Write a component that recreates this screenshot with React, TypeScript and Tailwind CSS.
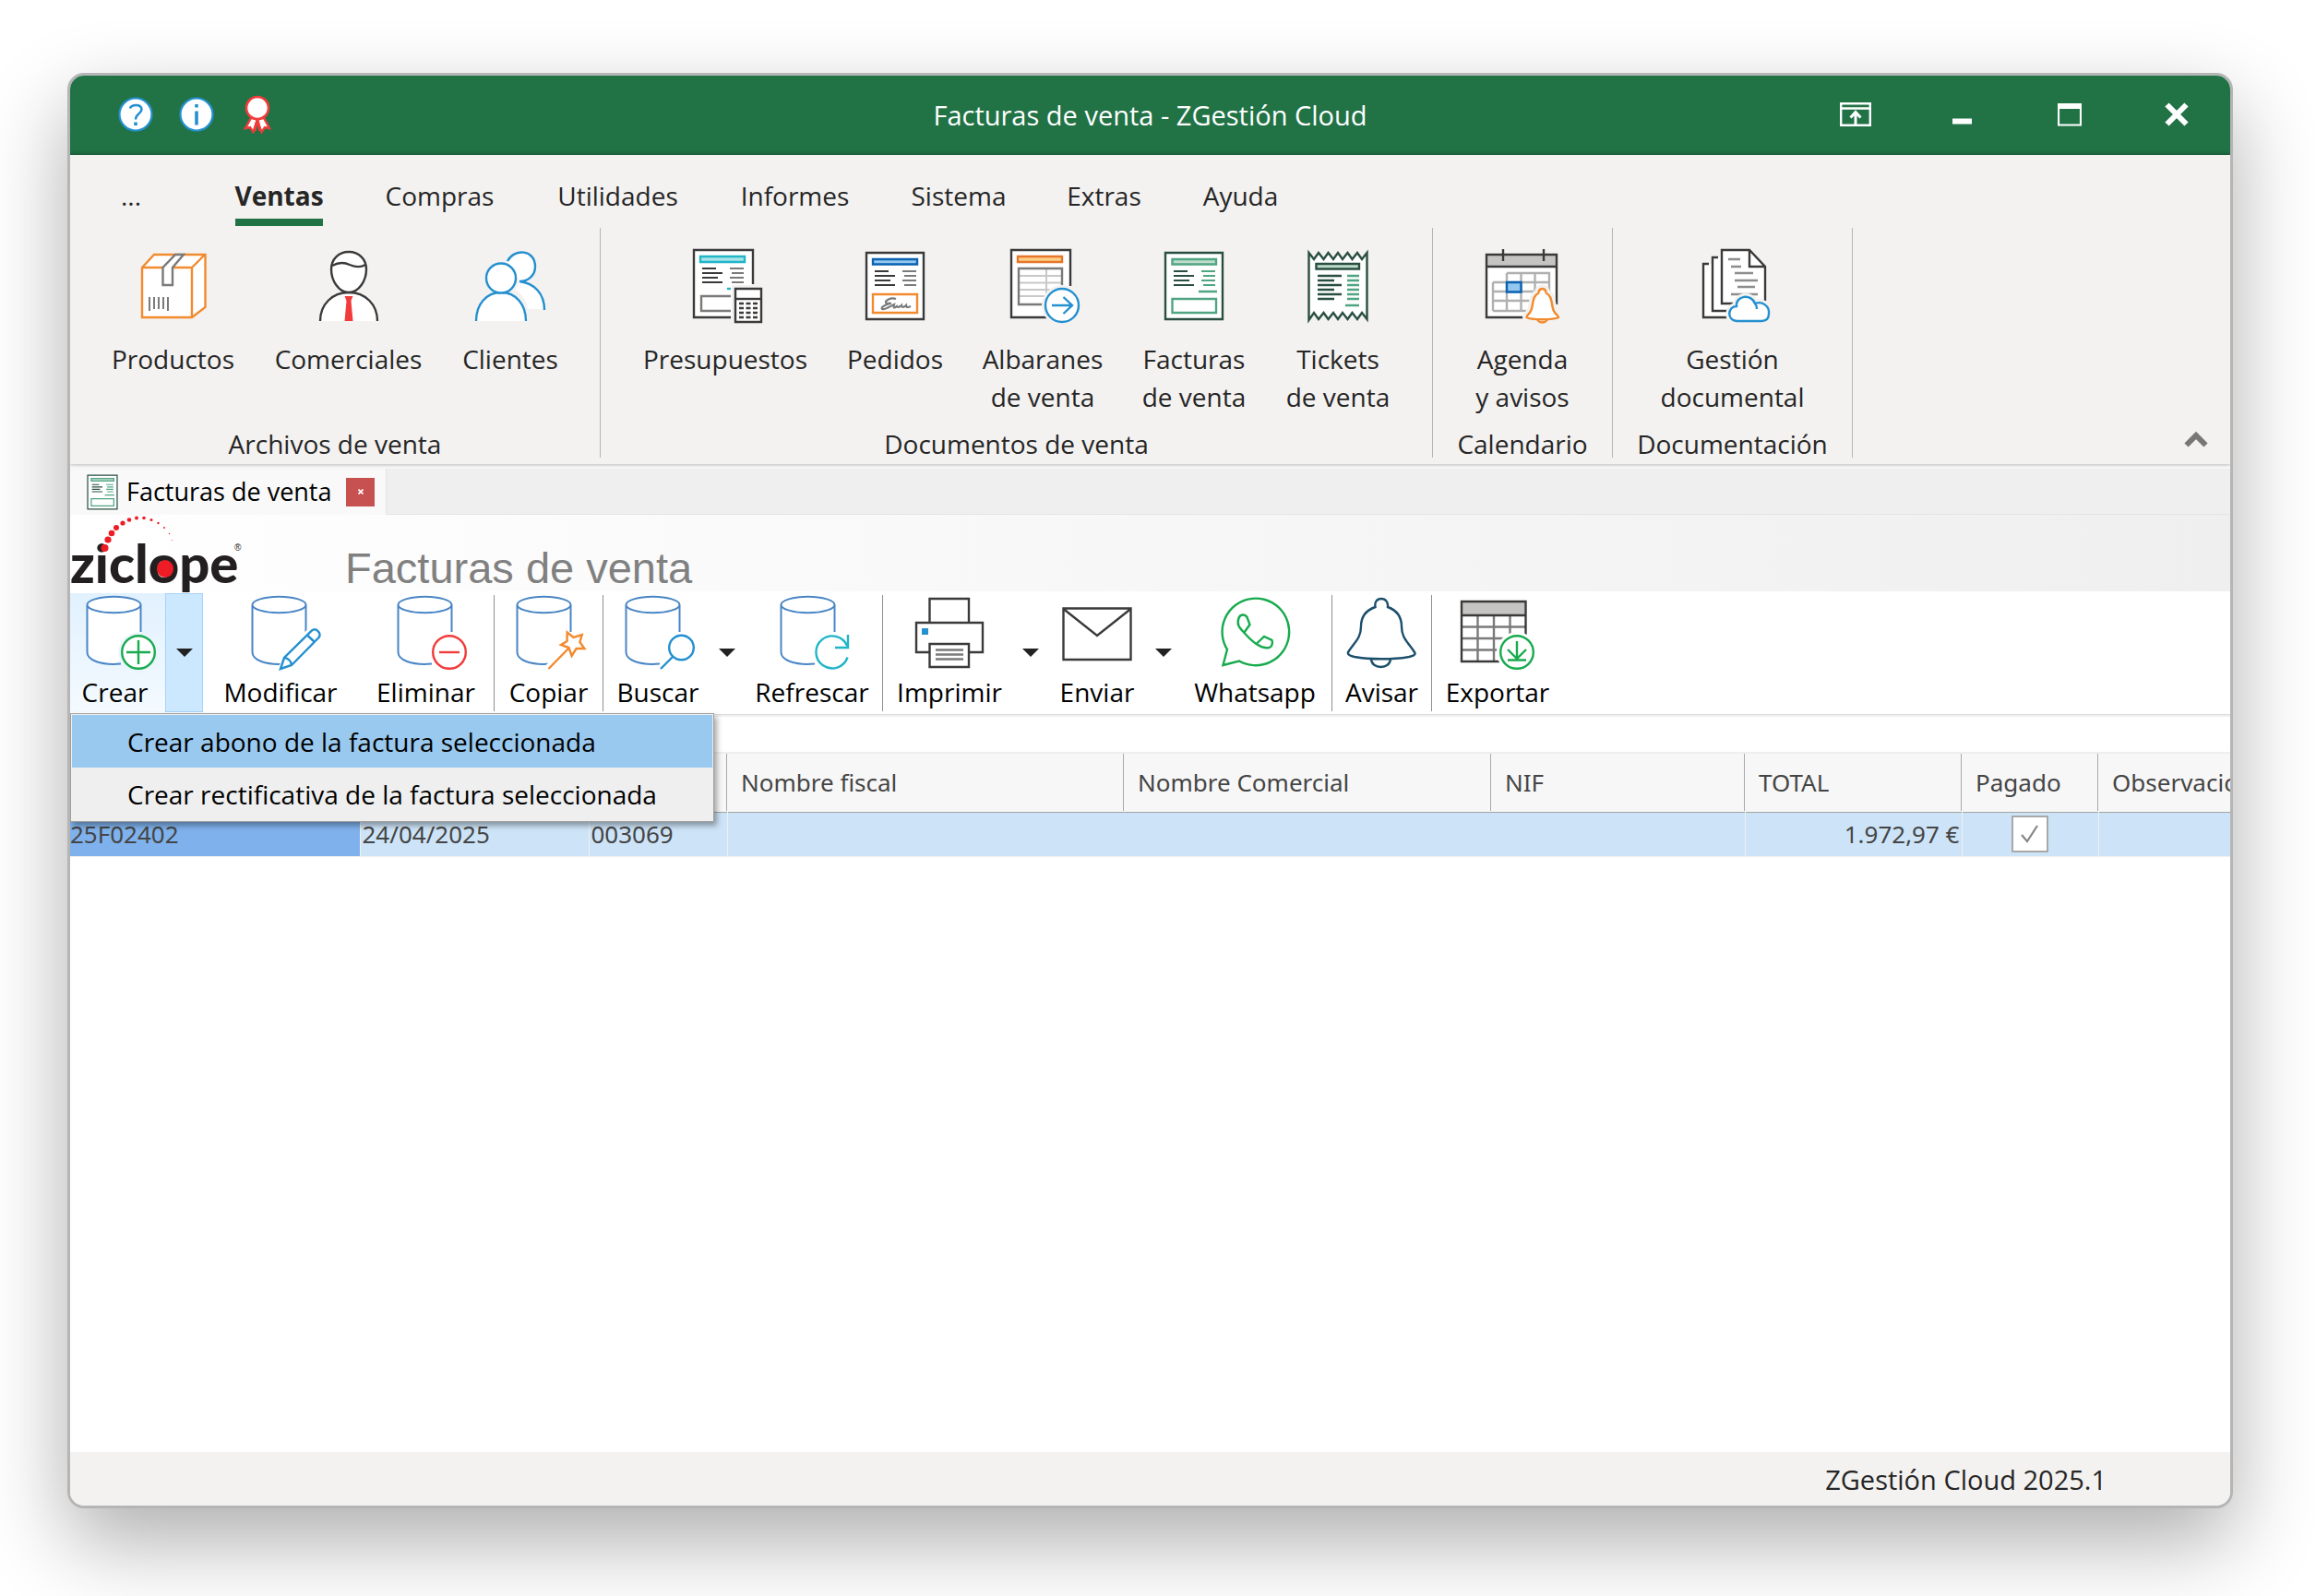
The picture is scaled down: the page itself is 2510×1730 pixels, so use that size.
import type { ReactNode } from "react";
import clsx from "clsx";

interface IconProps {
  children: ReactNode;
}

const RibbonIcon = ({ children }: IconProps) => (
  <svg
    viewBox="0 0 80 80"
    className="h-20 w-20 overflow-visible"
    fill="none"
    strokeWidth="2.4"
    aria-hidden="true"
  >
    {children}
  </svg>
);

const ToolIcon = ({ children }: IconProps) => (
  <svg
    viewBox="0 0 88 80"
    className="h-20 w-[88px] shrink-0 overflow-visible"
    fill="none"
    strokeWidth="2.4"
    aria-hidden="true"
  >
    {children}
  </svg>
);

const BoxIcon = () => (
  <RibbonIcon>
    <path d="M6 20 19 6H74.500V63L60 74H6Z" fill="#fff" stroke="#f28a2e" />
    <path d="M6 20H60V74M60 20 74 6" stroke="#f28a2e" />
    <path d="M28.500 20V39H39V20L51 6H42Z" fill="#fff" stroke="#7a7a7a" />
    <path d="M14 52V67M19 52V65M24 52V65M29 52V65M34 52V67" stroke="#7a7a7a" strokeWidth="2" />
  </RibbonIcon>
);

const SellerIcon = () => (
  <RibbonIcon>
    <path d="M9 78C9 60 22 47 40 47S71 60 71 78" fill="#fff" stroke="#3a3a3a" />
    <path d="M40 3C29 3 21 11 21 22C21 34 29 47 40 47S59 34 59 22C59 11 51 3 40 3Z" fill="#fff" stroke="#3a3a3a" />
    <path d="M22 18C29 14 35 14 41 17C48 20 53 20 58 17" stroke="#3a3a3a" />
    <path d="M35.500 51H44.500L42.500 56L44.500 78H35.500L37.500 56Z" fill="#f23b3b" />
  </RibbonIcon>
);

const ClientsIcon = () => (
  <RibbonIcon>
    <path d="M50 35C66 37 77 48 77 65H59C57 54 52 48 45 44Z" fill="#fff" />
    <path d="M37 13C44-1 67 0 67 19C67 28 60 35 50 35" fill="#fff" />
    <path d="M37 13C44-1 67 0 67 19C67 28 60 35 50 35C66 37 77 48 77 66" stroke="#2490d0" />
    <path d="M3 78C3 60 14 47 30 47S57 60 57 78" fill="#fff" stroke="#2490d0" />
    <circle cx="30" cy="31.500" r="16" fill="#fff" stroke="#2490d0" />
  </RibbonIcon>
);

const TextLines = ({ top, dark = "#3a3a3a", light = "#7a7a7a" }: { top: number; dark?: string; light?: string }) => (
  <g transform={`translate(0 ${top})`} strokeWidth="2.200">
    <path d="M18 0H33M18 5H40M18 10H35M18 15H40" stroke={dark} />
    <path d="M48 0H63M50 5H63M48 10H63M50 15H63" stroke={light} />
  </g>
);

const QuoteIcon = () => (
  <RibbonIcon>
    <path d="M70 38V1H6V74H46" fill="#fff" />
    <path d="M70 38V1H6V74H46" stroke="#3a3a3a" />
    <path d="M13 8H61V14H13Z" fill="#a9e4ea" stroke="#20b5c8" />
    <g transform="translate(-3 0)">
      <TextLines top={21} />
    </g>
    <path d="M42 43H46" stroke="#20b5c8" />
    <path d="M46 51H14V67H46" stroke="#7a7a7a" />
    <path d="M47 39H82V80H47Z" fill="#f3f2f0" />
    <path d="M51 43H79V79H51Z" fill="#fff" stroke="#3a3a3a" />
    <path d="M51 54H79" stroke="#3a3a3a" />
    <path d="M55 59H75M55 64H75M55 69H75M55 74H75" stroke="#3a3a3a" strokeDasharray="5 2.500" />
  </RibbonIcon>
);

const OrderIcon = () => (
  <RibbonIcon>
    <path d="M9 4H71V76H9Z" fill="#fff" stroke="#3a3a3a" />
    <path d="M16 11H64V16.500H16Z" fill="#93c7ef" stroke="#0a62b0" />
    <TextLines top={24} />
    <path d="M16 49H64V69H16Z" stroke="#f28a2e" />
    <path
      d="M41 54C35 52 29 56 30 58C31 60 35 58 35 59C30 60 24 63 26 65C30 66 36 61 39 60C38 63 38 65 42 62C43 64 46 62 47 61C47 64 50 63 52 61C52 64 55 63 57 62"
      stroke="#7a7a7a"
      strokeWidth="2.200"
    />
  </RibbonIcon>
);

const DeliveryIcon = () => (
  <RibbonIcon>
    <path d="M70 42V1H6V74H46" fill="#fff" />
    <path d="M46 74 70 50V42Z" fill="#fff" />
    <path d="M70 40V1H6V74H44" stroke="#3a3a3a" />
    <path d="M13 8H61V14H13Z" fill="#fbcf86" stroke="#e5762a" />
    <path d="M14 29H61M14 36.500H61M14 44H61M14 51H61M44 21V60" stroke="#c8c8c8" strokeWidth="2" />
    <path d="M14 21H61V60H14Z" stroke="#7a7a7a" />
    <circle cx="61" cy="61" r="22" fill="#f3f2f0" />
    <circle cx="61" cy="61" r="18" fill="#fff" stroke="#2490d0" />
    <path d="M50 61H72M62.500 52 72 61 62.500 70" stroke="#2490d0" />
  </RibbonIcon>
);

const InvoiceShape = () => (
  <>
    <path d="M9 4H71V76H9Z" fill="#fff" stroke="#2a4f42" />
    <path d="M16.500 11H64V16.500H16.500Z" fill="#bfdccb" stroke="#4fa582" />
    <TextLines top={24} dark="#2a4f42" light="#4fa582" />
    <path d="M45 46H65M16.500 54H64V69H16.500Z" stroke="#4fa582" />
  </>
);

const InvoiceIcon = () => (
  <RibbonIcon>
    <InvoiceShape />
  </RibbonIcon>
);

const TicketIcon = () => (
  <RibbonIcon>
    <path
      d="M8.500 77V4L14 11L19 4L24.500 11L29.500 4L35 11L40 4L45 11L50.500 4L55.500 11L61 4L66 11L71.500 4V76L66 69L61 76L55.500 69L50.500 76L45 69L40 76L35 69L29.500 76L24.500 69L19 76L14 69Z"
      fill="#fff"
      stroke="#2a4f42"
    />
    <path d="M16.500 16H63V21.500H16.500Z" fill="#bfdccb" stroke="#2a4f42" />
    <path d="M18 29H44M18 34H36M18 39H44M18 44H36M18 49H44M18 54H36" stroke="#2a4f42" />
    <path d="M50 29H63M50 34H63M50 39H63M50 44H63M50 49H63M50 54H63M48 61H63" stroke="#4fa582" />
  </RibbonIcon>
);

const CalendarIcon = () => (
  <RibbonIcon>
    <path d="M1 6H77V75H1Z" fill="#fff" />
    <path d="M1 6H77V19H1Z" fill="#c5c4c2" />
    <path d="M77 60V6H1V74H42M1 19H77M19 0V13M63 0V13" stroke="#3a3a3a" />
    <path d="M23 26H69V56M8 36H69M8 46H69M8 56H50M8 67H44M8 36V67M23 26V67M38.500 26V67M53.500 26V46M69 26V46" stroke="#b0b0b0" />
    <path d="M23 36H38.500V46.500H23Z" fill="#93c7ef" stroke="#0a62b0" />
    <path
      d="M61.500 43C57 43 58 47 57 48C50 51 52 62 49 67C48 70 44 72 44.500 74C49 77 74 77 79 74C79 72 75 70 74 67C71 62 73 51 66 48C65 47 66 43 61.500 43Z"
      fill="#fff"
      stroke="#f3f2f0"
      strokeWidth="9"
    />
    <path d="M56 75C56 81 67 81 67 75" fill="#fff" stroke="#f28a2e" />
    <path
      d="M61.500 43C57 43 58 47 57 48C50 51 52 62 49 67C48 70 44 72 44.500 74C49 77 74 77 79 74C79 72 75 70 74 67C71 62 73 51 66 48C65 47 66 43 61.500 43Z"
      fill="#fff"
      stroke="#f28a2e"
    />
  </RibbonIcon>
);

const DocumentsIcon = () => (
  <RibbonIcon>
    <path d="M14 16H8V74H34V16Z" fill="#fff" />
    <path d="M14 16H8V74H34" stroke="#3a3a3a" />
    <path d="M24 9H18V67H36V9Z" fill="#fff" />
    <path d="M24 9H18V67H36" stroke="#3a3a3a" />
    <path d="M28 1H58L75 19V60H28Z" fill="#fff" />
    <path d="M75 56V19L58 1H28V59H40M58 1V19H75" stroke="#3a3a3a" />
    <path d="M35 11H48M38 19H49M42 26H62M42 34H67M45 41H64M38 49H67" stroke="#8d8d8d" />
    <path
      d="M45 78C33 78 34 62 44 62C43 50 60 48 64 59C72 56 80 62 79 70C79 75 76 78 71 78Z"
      fill="#fff"
      stroke="#f3f2f0"
      strokeWidth="8"
    />
    <path
      d="M45 78C33 78 34 62 44 62C43 50 60 48 64 59C72 56 80 62 79 70C79 75 76 78 71 78ZM64 59C66 61 66 62 66 65"
      fill="#fff"
      stroke="#2490d0"
    />
  </RibbonIcon>
);

const Database = ({ x = 0 }: { x?: number }) => (
  <g transform={`translate(${x} 0)`}>
    <path d="M13.500 9.500V62C14 69 26 74 42.500 74L72 55V9.500Z" fill="#fff" />
    <path d="M71.500 39V10M13.500 10V61C13.500 69 27 75.500 50 73.500" stroke="#4a86c5" strokeWidth="2" />
    <ellipse cx="42.500" cy="9.500" rx="29" ry="8.700" fill="#fff" stroke="#4a86c5" strokeWidth="2" />
  </g>
);

const CreateIcon = () => (
  <ToolIcon>
    <Database />
    <circle cx="69" cy="61" r="21.500" fill="#e9f4fe" />
    <circle cx="69" cy="61" r="17.800" fill="#fff" stroke="#17ab4e" />
    <path d="M56 61H82M69 48V74" stroke="#17ab4e" />
  </ToolIcon>
);

const EditIcon = () => (
  <ToolIcon>
    <Database />
    <path d="M44 79 50 63 77 36 87 46 60 75Z" fill="#fff" stroke="#fff" strokeWidth="5" />
    <path d="M44 79 48 67 78 37.500C82 34 89 40 85.500 45L56 75ZM48 67C52 67 56 71 56 75M73 42.500 81 50" stroke="#2490d0" />
  </ToolIcon>
);

const DeleteIcon = () => (
  <ToolIcon>
    <Database />
    <circle cx="69" cy="61" r="21.500" fill="#fff" />
    <circle cx="69" cy="61" r="17.800" stroke="#f23b3b" />
    <path d="M58 61H80" stroke="#f23b3b" />
  </ToolIcon>
);

const CopyIcon = () => (
  <ToolIcon>
    <Database x={-4} />
    <path d="M43 80 62 60" stroke="#fff" strokeWidth="10" />
    <path d="M43.500 79 65 57" stroke="#f28a2e" />
    <path
      d="M63.700 39.500 70.500 45 79.700 42 77.400 50 82.400 57 73.600 57 68.600 65 65.500 56 57 53 63.500 49Z"
      fill="#fff"
      stroke="#f28a2e"
    />
  </ToolIcon>
);

const SearchIcon = () => (
  <ToolIcon>
    <Database x={-4} />
    <circle cx="69.500" cy="56" r="17" fill="#fff" />
    <path d="M47 79 60 66" stroke="#fff" strokeWidth="8" />
    <circle cx="69.500" cy="56" r="13.300" stroke="#2490d0" />
    <path d="M47 79 60 66" stroke="#2490d0" />
  </ToolIcon>
);

const RefreshIcon = () => (
  <ToolIcon>
    <Database x={-3} />
    <circle cx="66" cy="61" r="21.500" fill="#fff" />
    <path d="M82.500 66.500A17.500 17.500 0 1 1 82 54M83 42V56H69" stroke="#20b5c8" />
  </ToolIcon>
);

const PrintIcon = () => (
  <ToolIcon>
    <path d="M22.500 29V3H65V29M22.500 61H8V29H80V61H65" stroke="#3a3a3a" />
    <path d="M22.500 52H65V77H22.500Z" stroke="#3a3a3a" />
    <path d="M14 35H21V42H14Z" fill="#2490d0" />
    <path d="M29 58.500H59M29 63.500H59M29 68.500H59" stroke="#7a7a7a" />
  </ToolIcon>
);

const MailIcon = () => (
  <ToolIcon>
    <path d="M7.500 13.500H80.500V69H7.500Z" stroke="#3a3a3a" />
    <path d="M7.500 14 44 43 80.500 14" stroke="#3a3a3a" />
  </ToolIcon>
);

const WhatsappIcon = () => (
  <ToolIcon>
    <path d="M14 58A36.300 36.300 0 1 1 27 70.500L9.500 75Z" stroke="#17ab4e" />
    <path
      d="M32.500 39.500 38.500 31 35.500 23C33 19 28 20 26.500 24C24 31 27 34 32.500 40C37 45 41 49 45.500 52C53 57 61 58 62.500 53C63.500 50 63 49 62.500 48L54 44 45.500 52"
      stroke="#17ab4e"
    />
  </ToolIcon>
);

const BellIcon = () => (
  <ToolIcon>
    <path
      d="M43 3C38 3 35.500 7 36.500 12C25 16 21 23 21 33C21 46 14 50 7 61C6 64 10 65 14 66C30 69 56 69 73 66C77 65 81 64 79 61C72 50 65 46 65 33C65 23 61 16 50 12C50.500 7 48 3 43 3Z"
      stroke="#1b4f6b"
    />
    <path d="M32 68C32 80 53 80 53 68" stroke="#1b4f6b" />
  </ToolIcon>
);

const ExportIcon = () => (
  <ToolIcon>
    <path d="M5 6H74.500V21H5Z" fill="#c5c4c2" />
    <path d="M5 33.500H74M5 46H56M5 58.500H44M22.500 21V71M40 21V71M57.500 21V45" stroke="#7a7a7a" />
    <path d="M74.500 42V6H5V71H46M5 21H74.500" stroke="#3a3a3a" />
    <circle cx="65" cy="61" r="22" fill="#fff" />
    <circle cx="65" cy="61" r="17.800" stroke="#17ab4e" />
    <path d="M65 49V67M55 58 65 68 75 58M55 69.500H75" stroke="#17ab4e" />
  </ToolIcon>
);

const HelpIcon = () => (
  <svg viewBox="0 0 38 38" className="size-[38px]" fill="none" aria-hidden="true">
    <circle cx="19" cy="19" r="17.500" fill="#fff" stroke="#2490d0" strokeWidth="2.200" />
    <path d="M13 12.500C14 8.500 25.500 7 25.500 13.500C25.500 18 19 18.500 19 24.500" stroke="#2490d0" strokeWidth="2.600" />
    <path d="M17.200 27.500H20.800V31H17.200Z" fill="#2490d0" />
  </svg>
);

const InfoIcon = () => (
  <svg viewBox="0 0 38 38" className="size-[38px]" fill="none" aria-hidden="true">
    <circle cx="19" cy="19" r="17.500" fill="#fff" stroke="#2490d0" strokeWidth="2.200" />
    <path d="M17.200 8H20.800V11.500H17.200ZM17.200 15.500H20.800V30.500H17.200Z" fill="#2490d0" />
  </svg>
);

const MedalIcon = () => (
  <svg viewBox="0 0 32 42" className="h-[42px] w-8" fill="none" aria-hidden="true">
    <path d="M9 25 3 36 8 35 11.500 40 15.500 28 20.500 40 24 35 29 36 23 25Z" fill="#fff" stroke="#f23b3b" strokeWidth="2.400" />
    <path d="M16 26 13 39M16 26 19 39" stroke="#f23b3b" strokeWidth="3" />
    <circle cx="16" cy="14" r="12" fill="#fff" stroke="#f23b3b" strokeWidth="2.600" />
  </svg>
);

const titleButton = "flex w-[116px] items-center justify-center";

const TitleBar = () => (
  <header className="grid h-[86px] shrink-0 grid-cols-[1fr_auto_1fr] bg-[#217346] text-white">
    <div className="flex pb-[3px] pl-[38px]">
      {[
        { label: "Ayuda", icon: <HelpIcon /> },
        { label: "Información", icon: <InfoIcon /> },
        { label: "Licencia", icon: <MedalIcon /> },
      ].map(({ label, icon }) => (
        <button key={label} type="button" aria-label={label} className="flex w-[66px] items-center justify-center">
          {icon}
        </button>
      ))}
    </div>
    <h1 className="self-center text-[29px] leading-10">Facturas de venta - ZGestión Cloud</h1>
    <div className="flex justify-end pb-[3px]">
      <button type="button" aria-label="Ocultar cinta" className={titleButton}>
        <svg viewBox="0 0 34 28" className="h-7 w-[34px]" fill="none" stroke="#fff" strokeWidth="2.400">
          <path d="M1.200 2.200H32.800V25.800H1.200ZM1.200 7.500H32.800" />
          <path d="M17 25V11M11.500 17.500 17 11.500 22.500 17.500" strokeWidth="3" />
        </svg>
      </button>
      <button type="button" aria-label="Minimizar" className={titleButton}>
        <svg viewBox="0 0 26 28" className="h-7 w-[26px]">
          <path d="M2 18.500H23V24.500H2Z" fill="#fff" />
        </svg>
      </button>
      <button type="button" aria-label="Maximizar" className={titleButton}>
        <svg viewBox="0 0 26 28" className="h-7 w-[26px]" fill="none" stroke="#fff">
          <path d="M1 3H25V25.500H1Z" strokeWidth="2.200" />
          <path d="M0 5H26" strokeWidth="6" />
        </svg>
      </button>
      <button type="button" aria-label="Cerrar" className={titleButton}>
        <svg viewBox="0 0 26 28" className="h-7 w-[26px]" stroke="#fff" strokeWidth="6">
          <path d="M2.500 3.500 23.500 24.500M23.500 3.500 2.500 24.500" />
        </svg>
      </button>
    </div>
  </header>
);

const menuTabs = [
  { label: "...", width: "mr-9 w-5" },
  { label: "Ventas", width: "w-[95px]" },
  { label: "Compras", width: "w-[119px]" },
  { label: "Utilidades", width: "w-[133px]" },
  { label: "Informes", width: "w-[117px]" },
  { label: "Sistema", width: "w-[104px]" },
  { label: "Extras", width: "w-[77px]" },
  { label: "Ayuda", width: "w-[85px]" },
];

const MenuTabs = () => (
  <nav className="flex h-[79px] items-end gap-[67px] pb-0.5 pl-14">
    {menuTabs.map(({ label, width }) => (
      <button
        key={label}
        type="button"
        className={clsx(
          "flex justify-center border-b-8 pb-[5px] whitespace-nowrap leading-10",
          width,
          label === "Ventas" ? "border-[#217346] font-bold" : "border-transparent",
        )}
      >
        {label}
      </button>
    ))}
  </nav>
);

const ribbonGroups = [
  {
    title: "Archivos de venta",
    width: "w-[574px] pl-[23px]",
    items: [
      { lines: ["Productos"], width: "w-[177px]", icon: <BoxIcon /> },
      { lines: ["Comerciales"], width: "w-[203px]", icon: <SellerIcon /> },
      { lines: ["Clientes"], width: "w-[148px]", icon: <ClientsIcon /> },
    ],
  },
  {
    title: "Documentos de venta",
    width: "w-[901px] pl-[25px]",
    items: [
      { lines: ["Presupuestos"], width: "w-[220px]", icon: <QuoteIcon /> },
      { lines: ["Pedidos"], width: "w-[148px]", icon: <OrderIcon /> },
      { lines: ["Albaranes", "de venta"], width: "w-[172px]", icon: <DeliveryIcon /> },
      { lines: ["Facturas", "de venta"], width: "w-[156px]", icon: <InvoiceIcon /> },
      { lines: ["Tickets", "de venta"], width: "w-[156px]", icon: <TicketIcon /> },
    ],
  },
  {
    title: "Calendario",
    width: "w-[194px]",
    items: [{ lines: ["Agenda", "y avisos"], width: "w-full", icon: <CalendarIcon /> }],
  },
  {
    title: "Documentación",
    width: "w-[259px]",
    items: [{ lines: ["Gestión", "documental"], width: "w-full", icon: <DocumentsIcon /> }],
  },
];

const Ribbon = () => (
  <div className="flex h-64">
    {ribbonGroups.map(({ title, width, items }) => (
      <section key={title} className="flex">
        <div className="flex flex-col justify-between pb-1">
          <div className={clsx("flex pt-[23px]", width)}>
            {items.map((item) => (
              <button
                key={item.lines[0]}
                type="button"
                className={clsx("flex flex-col items-center gap-[19px] whitespace-nowrap leading-[41px]", item.width)}
              >
                {item.icon}
                <span className="flex flex-col">
                  {item.lines.map((line) => (
                    <span key={line}>{line}</span>
                  ))}
                </span>
              </button>
            ))}
          </div>
          <h2 className="text-center leading-9">{title}</h2>
        </div>
        <div className="h-[249px] w-px bg-[#b5b5b5]" />
      </section>
    ))}
    <button type="button" aria-label="Contraer cinta" className="mt-auto mr-6 mb-[18px] ml-auto">
      <svg viewBox="0 0 26 18" className="h-[18px] w-[26px]" fill="none" stroke="#777" strokeWidth="6">
        <path d="M2.500 15.500 13 5 23.500 15.500" />
      </svg>
    </button>
  </div>
);

const DocumentTab = () => (
  <div className="flex h-[50px] shrink-0 border-b border-[#e4e4e4] bg-[#efefef]">
    <div className="-mb-px flex w-[343px] items-center border-r border-[#e4e4e4] bg-[#f9f9f9] pl-[18px] text-black">
      <svg viewBox="7 2 66 76" className="h-[39px] w-[34px] shrink-0" fill="none" strokeWidth="2.400" preserveAspectRatio="none">
        <InvoiceShape />
      </svg>
      <span className="w-[237px] shrink-0 pl-[9px] text-[27px] whitespace-nowrap">Facturas de venta</span>
      <button
        type="button"
        aria-label="Cerrar pestaña"
        className="ml-2.5 flex size-[31px] shrink-0 items-center justify-center bg-[#c75050]"
      >
        <svg viewBox="0 0 6 6" className="size-1.5" stroke="#fff" strokeWidth="1.600">
          <path d="M.5.500 5.500 5.500M5.500.500.500 5.500" />
        </svg>
      </button>
    </div>
  </div>
);

const logoDots = [
  [37.500, 35, 4],
  [41, 26, 3.600],
  [45, 19, 3.300],
  [50, 13, 3],
  [57, 8, 2.600],
  [64, 4.500, 2.300],
  [72, 2.500, 2],
  [80, 2.500, 1.800],
  [88, 4.500, 1.500],
  [95.500, 8, 1.200],
  [102, 13, 1],
  [107.500, 19.500, 0.700],
  [110.500, 26.500, 0.500],
];

const Logo = () => (
  <svg viewBox="0 0 188 82" className="h-[82px] w-[188px] shrink-0 overflow-visible" role="img" aria-label="ziclope">
    <text x="0" y="73" fill="#231f20" className="font-['Lato',sans-serif] text-[58px] font-black">
      ziclope
      <tspan x="178" y="38" className="font-['Liberation_Sans',sans-serif] text-[10px] font-normal">
        ®
      </tspan>
    </text>
    {logoDots.map(([cx, cy, r]) => (
      <circle key={cx} cx={cx} cy={cy} r={r} fill="#ee1c25" />
    ))}
    <ellipse cx="103" cy="57.500" rx="9" ry="9.500" fill="#ee1c25" />
  </svg>
);

const Banner = () => (
  <div className="flex h-[85px] shrink-0 items-end border-b-2 border-white bg-linear-to-r from-white to-[#efefef]">
    <Logo />
    <h2 className="ml-[110px] font-['Liberation_Sans',sans-serif] text-[47px] leading-[50px] text-[#808080]">
      Facturas de venta
    </h2>
  </div>
);

interface ToolButtonProps {
  label: string;
  icon: ReactNode;
  width: string;
  dropdown?: boolean;
  active?: boolean;
  divider?: boolean;
}

const tools: ToolButtonProps[] = [
  { label: "Crear", icon: <CreateIcon />, width: "w-[103px] pr-1.5", dropdown: true, active: true },
  { label: "Modificar", icon: <EditIcon />, width: "w-[168px]" },
  { label: "Eliminar", icon: <DeleteIcon />, width: "w-[147px]" },
  { label: "Copiar", icon: <CopyIcon />, width: "w-[117px]", divider: true },
  { label: "Buscar", icon: <SearchIcon />, width: "w-[118px]", dropdown: true, divider: true },
  { label: "Refrescar", icon: <RefreshIcon />, width: "w-[152px]" },
  { label: "Imprimir", icon: <PrintIcon />, width: "w-[144px]", dropdown: true, divider: true },
  { label: "Enviar", icon: <MailIcon />, width: "w-[112px]", dropdown: true },
  { label: "Whatsapp", icon: <WhatsappIcon />, width: "w-[166px]" },
  { label: "Avisar", icon: <BellIcon />, width: "w-[107px]", divider: true },
  { label: "Exportar", icon: <ExportIcon />, width: "w-[142px]", divider: true },
];

const ToolButton = ({ label, icon, width, dropdown, active, divider }: ToolButtonProps) => (
  <>
    {divider && <div className="mt-0.5 h-[126px] w-px bg-[#8f8f8f]" />}
    <button
      type="button"
      className={clsx(
        "flex h-[129px] flex-col items-center pt-[3px] whitespace-nowrap",
        width,
        active && "bg-linear-to-b from-[#e1f1fe] to-[#f4faff]",
      )}
    >
      {icon}
      <span className="mt-1 leading-10">{label}</span>
    </button>
    {dropdown && (
      <button
        type="button"
        aria-label={`Opciones de ${label}`}
        className={clsx(
          "flex h-[129px] items-center justify-center",
          active ? "w-[41px] border border-[#a4d3fa] bg-[#cce8ff]" : "w-8",
        )}
      >
        <svg viewBox="0 0 18 9" className="h-[9px] w-[18px]" fill="#222">
          <path d="M0 0H18L9 9Z" />
        </svg>
      </button>
    )}
  </>
);

const Toolbar = () => (
  <div className="relative flex h-[134px] shrink-0 border-b-2 border-[#efefef] bg-white text-black">
    <div className="flex grow border-b border-[#dcdcdc]">
      {tools.map((tool) => (
        <ToolButton key={tool.label} {...tool} />
      ))}
    </div>
    <div
      role="menu"
      className="absolute top-[130px] left-0 z-10 w-[698px] border border-[#a0a0a0] bg-[#efefef] p-px shadow-[3px_4px_6px_rgba(0,0,0,0.35)]"
    >
      <button type="button" role="menuitem" className="block h-[57px] w-full bg-[#99c9ef] pl-[60px] text-left">
        Crear abono de la factura seleccionada
      </button>
      <button type="button" role="menuitem" className="block h-[57px] w-full pl-[60px] text-left">
        Crear rectificativa de la factura seleccionada
      </button>
    </div>
  </div>
);

const columns = [
  { label: "", width: "w-[314px]" },
  { label: "", width: "w-[248px]" },
  { label: "", width: "w-[150px]" },
  { label: "Nombre fiscal", width: "w-[430px]" },
  { label: "Nombre Comercial", width: "w-[398px]" },
  { label: "NIF", width: "w-[275px]" },
  { label: "TOTAL", width: "w-[235px]" },
  { label: "Pagado", width: "w-[148px]" },
  { label: "Observaciones", width: "" },
];

const InvoiceTable = () => (
  <div className="grow overflow-hidden bg-white pt-[38px] font-['Noto_Sans',sans-serif] text-[26px] text-[#454545]">
    <table className="w-full table-fixed border-collapse">
      <thead>
        <tr className="h-16 border-t-2 border-b border-t-[#efefef] border-b-[#a3a3a3] bg-[#f7f7f7]">
          {columns.map(({ label, width }, i) => (
            <th key={i} scope="col" className={clsx("overflow-hidden p-0 font-normal", width)}>
              <div
                className={clsx(
                  "flex h-[62px] items-center pl-[15px] whitespace-nowrap",
                  i < columns.length - 1 && "border-r border-[#a9a9a9]",
                )}
              >
                {label}
              </div>
            </th>
          ))}
        </tr>
      </thead>
      <tbody>
        <tr className="h-12 border-b border-[#efefef] bg-[#cde4f8] leading-[46px]">
          <td className="border-r border-[#efefef] bg-[#7fb2ec] p-0">25F02402</td>
          <td className="border-r border-[#efefef] p-0 pl-0.5">24/04/2025</td>
          <td className="border-r border-[#efefef] p-0 pl-0.5">003069</td>
          <td className="p-0" />
          <td className="p-0" />
          <td className="border-r border-[#efefef] p-0" />
          <td className="border-r border-[#efefef] p-0 pr-0.5 text-right">1.972,97 €</td>
          <td className="border-r border-[#efefef] p-0">
            <label className="relative mx-auto flex size-10 items-center justify-center">
              <input
                type="checkbox"
                defaultChecked
                aria-label="Pagado"
                className="size-10 appearance-none border-2 border-[#a8a8a8] bg-white"
              />
              <svg
                viewBox="0 0 22 22"
                className="pointer-events-none absolute size-[22px]"
                fill="none"
                stroke="#858585"
                strokeWidth="2.200"
              >
                <path d="M2 12 8 19 19 2" />
              </svg>
            </label>
          </td>
          <td className="p-0" />
        </tr>
      </tbody>
    </table>
  </div>
);

const App = () => {
  return (
    <div className="flex min-h-screen bg-white pt-[79px] pr-[90px] pb-[95px] pl-[73px] font-['Open_Sans',sans-serif] text-[28px] text-[#262626]">
      <main className="flex min-w-0 grow flex-col overflow-hidden rounded-[18px] border-3 border-[#b5b5b5] bg-white shadow-[0_36px_90px_rgba(0,0,0,0.32)]">
        <TitleBar />
        <div className="z-10 h-[335px] shrink-0 bg-[#f3f2f0] shadow-[0_0_5px_1px_rgba(0,0,0,0.3)]">
          <MenuTabs />
          <Ribbon />
        </div>
        <div className="flex grow flex-col pt-[5px]">
          <DocumentTab />
          <Banner />
          <Toolbar />
          <InvoiceTable />
        </div>
        <footer className="flex h-[58px] shrink-0 items-center justify-end bg-[#f3f2f0] pt-0.5 pr-[134px] text-[29px] leading-10">
          ZGestión Cloud 2025.1
        </footer>
      </main>
    </div>
  );
};

export default App;
